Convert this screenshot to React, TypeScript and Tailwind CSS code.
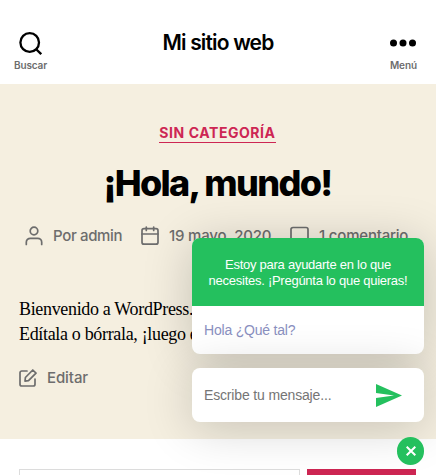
import React from "react";

const stroke = { fill: "none", stroke: "currentColor", strokeWidth: 1.7, strokeLinecap: "round", strokeLinejoin: "round" } as const;

function SiteHeader() {
  return (
    <header className="flex h-[84px] items-start justify-between bg-white pl-[14px] pr-[19px] text-[#6d6d6d]">
      <button className="flex w-[33px] flex-col items-center pt-8">
        <svg className="size-[23px] text-black" viewBox="0 0 23 23" fill="none" stroke="currentColor" strokeWidth="2.3">
          <circle cx="10.7" cy="10.5" r="9.3" />
          <path d="M17.2 17.2 22.2 22.2" />
        </svg>
        <span className="mt-[4px] text-[10px] leading-[13px] font-semibold tracking-[-0.15px]">Buscar</span>
      </button>
      <h1 className="mt-[29px] mr-px text-[21px] leading-[28px] font-semibold tracking-[-0.84px] whitespace-nowrap text-black">Mi sitio web</h1>
      <button className="flex w-[27px] flex-col items-center pt-[39px]">
        <svg className="h-[8px] w-[27px] text-black" viewBox="0 0 27 8" fill="currentColor">
          <circle cx="3.5" cy="4" r="3.5" />
          <circle cx="13" cy="4" r="3.5" />
          <circle cx="22.5" cy="4" r="3.5" />
        </svg>
        <span className="mt-[12px] text-[10px] leading-[13px] font-semibold tracking-[-0.1px]">Menú</span>
      </button>
    </header>
  );
}

function PostMeta() {
  return (
    <ul className="mt-5 flex h-[24px] items-center pl-[25px] text-[15px] leading-[24px] font-medium tracking-[-0.2px] whitespace-nowrap text-[#6d6d6d]">
      <li className="flex w-[116px] items-center gap-[10px]">
        <svg className="h-5 w-[18px]" viewBox="0 0 18 20" {...stroke}>
          <circle cx="9" cy="5" r="3.8" />
          <path d="M1.3 18.5v-2.2a4 4 0 0 1 4-4h7.4a4 4 0 0 1 4 4v2.2" />
        </svg>
        <span className="tracking-[-0.35px]">Por admin</span>
      </li>
      <li className="flex w-[149px] items-center gap-[10px]">
        <svg className="h-5 w-[18px]" viewBox="0 0 18 20" {...stroke}>
          <rect x="1" y="2.7" width="16" height="15.5" rx="2" />
          <path d="M1 8h16M5.3 1v3.4M12.7 1v3.4" />
        </svg>
        19 mayo, 2020
      </li>
      <li className="flex items-center gap-[10px]">
        <svg className="h-5 w-[19px]" viewBox="0 0 19 20" {...stroke}>
          <path d="M3 1.5h13a2 2 0 0 1 2 2v9a2 2 0 0 1-2 2H5l-4 4v-15a2 2 0 0 1 2-2z" />
        </svg>
        1 comentario
      </li>
    </ul>
  );
}

function Article() {
  return (
    <article className="h-[355px] bg-[#f5efe0] pt-[40px]">
      <div className="flex justify-center pr-px">
        <a className="border-b border-[#cd2653] text-[14px] leading-[18px] font-bold tracking-[0.56px] text-[#cd2653]">SIN CATEGORÍA</a>
      </div>
      <h2 className="mt-[19px] pr-px text-center text-[36px] leading-[42px] font-extrabold tracking-[-1.67px] text-black">¡Hola, mundo!</h2>
      <PostMeta />
      <div className="mt-[49px] h-[50px] pl-[19px] font-['Liberation_Serif',serif] text-[18px] leading-[25px] whitespace-nowrap text-black">
        <p className="tracking-[-0.33px]">Bienvenido a WordPress. Esta es</p>
        <p className="tracking-[-0.33px]">Edítala o bórrala, ¡luego empieza</p>
      </div>
      <a className="mt-[19px] flex items-center gap-[10px] pl-[19px] text-[15px] leading-[24px] font-medium tracking-[-0.1px] text-[#6d6d6d]">
        <svg className="size-[18px]" viewBox="0 0 18 18" {...stroke}>
          <path d="M8 2H2.8A1.8 1.8 0 0 0 1 3.8v11.4A1.8 1.8 0 0 0 2.8 17h11.4a1.8 1.8 0 0 0 1.8-1.8V10" />
          <path d="M13.8 1 17 4.2 9.5 11.7 6 12.2 6.4 8.5z" />
        </svg>
        Editar
      </a>
    </article>
  );
}

function ChatWidget() {
  return (
    <aside className="absolute top-[238px] left-[192px] flex w-[232px] flex-col font-['Liberation_Sans',Arial,sans-serif]">
      <section className="h-[116px] overflow-hidden rounded-[8px] bg-white shadow-[0_5px_50px_rgba(0,0,0,0.2)]">
        <p className="flex h-[68px] items-center justify-center bg-[#24c05e] pt-[2px] text-center text-[13px] leading-4 tracking-[-0.26px] whitespace-nowrap text-white">
          <span>Estoy para ayudarte en lo que<br />necesites. ¡Pregúnta lo que quieras!</span>
        </p>
        <p className="flex h-[48px] items-center pl-3 text-[14px] tracking-[-0.2px] text-[#8a90bf]">Hola ¿Qué tal?</p>
      </section>
      <form className="mt-[14px] flex h-[54px] items-center justify-between rounded-[8px] bg-white pr-[22px] pl-3 shadow-[0_5px_50px_rgba(0,0,0,0.2)]">
        <span className="text-[14px] tracking-[-0.16px] text-[#757575]">Escribe tu mensaje...</span>
        <svg className="h-[23px] w-[26px]" viewBox="0 0 26 23" fill="#24c05e">
          <path d="M0 0 26 11.5 0 23V14l18-2.5L0 9z" />
        </svg>
      </form>
      <button className="mt-[15px] flex h-[28px] w-[27px] items-center justify-center self-end rounded-full bg-[#24c05e]">
        <svg className="size-[10px]" viewBox="0 0 10 10" fill="none" stroke="white" strokeWidth="2">
          <path d="m.7.7 8.6 8.6M9.3.7.7 9.3" />
        </svg>
      </button>
    </aside>
  );
}

export default function App() {
  return (
    <div className="relative h-[475px] w-[436px] overflow-hidden bg-white font-['Inter',sans-serif]">
      <SiteHeader />
      <Article />
      <div className="mt-[30px] flex h-[6px] gap-[7px] overflow-hidden pl-[19px]">
        <div className="h-[40px] w-[281px] border border-[#dcdcdc] bg-white" />
        <div className="h-[40px] w-[109px] bg-[#cd2653]" />
      </div>
      <ChatWidget />
    </div>
  );
}
